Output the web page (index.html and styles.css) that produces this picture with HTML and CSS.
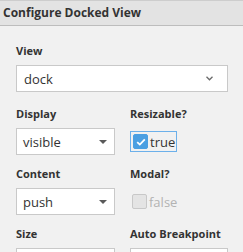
FILE: index.html
```html
<!DOCTYPE html>
<html>
<head>
    <title>Configure Docked View</title>
    <link rel="stylesheet" href="styles.css">
</head>
<body>
    <div class="panel-header">Configure Docked View</div>
    <div class="panel-body">
        <div class="field full">
            <div class="label">View</div>
            <div class="select">
                <span>dock</span>
                <svg class="chevron" width="7" height="5" viewBox="0 0 7 5"><polyline points="0.5,0.8 3.5,3.8 6.5,0.8" fill="none" stroke="#6a6a6a" stroke-width="1.3"/></svg>
            </div>
        </div>

        <div class="row">
            <div class="field">
                <div class="label">Display</div>
                <div class="select">
                    <span>visible</span>
                    <span class="caret"></span>
                </div>
            </div>
            <div class="field">
                <div class="label">Resizable?</div>
                <div class="check focused">
                    <span class="box checked">
                        <svg width="10" height="8" viewBox="0 0 10 8"><polyline points="1.2,4.2 3.8,6.6 8.8,1.4" fill="none" stroke="#fff" stroke-width="1.8"/></svg>
                    </span>
                    <span>true</span>
                </div>
            </div>
        </div>

        <div class="row">
            <div class="field">
                <div class="label">Content</div>
                <div class="select">
                    <span>push</span>
                    <span class="caret"></span>
                </div>
            </div>
            <div class="field">
                <div class="label">Modal?</div>
                <div class="check disabled">
                    <span class="box"></span>
                    <span>false</span>
                </div>
            </div>
        </div>

        <div class="row">
            <div class="field">
                <div class="label">Size</div>
                <div class="select"></div>
            </div>
            <div class="field">
                <div class="label">Auto Breakpoint</div>
                <div class="select"></div>
            </div>
        </div>
    </div>
</body>
</html>
```

FILE: styles.css
```css
body {
    margin: 0;
    background: #f1f1f1;
    font-family: 'Open Sans', sans-serif;
    color: #333;
}
.panel-header {
    height: 24px;
    line-height: 24px;
    padding-left: 3px;
    background: #e3e3e3;
    border-top: 1px solid #cdcdcd;
    border-bottom: 1px solid #bdbdbd;
    font-size: 12px;
    font-weight: 700;
    color: #333;
}
.panel-body {
    padding: 17px 15px 0 16px;
}
.row {
    display: grid;
    grid-template-columns: 99px 98px;
    column-gap: 15px;
}
.field {
    margin-bottom: 11px;
}
.field.full {
    margin-bottom: 14px;
}
.label {
    font-size: 11px;
    font-weight: 700;
    line-height: 16px;
    margin-bottom: 6px;
    color: #333;
}
.select {
    display: flex;
    align-items: center;
    justify-content: space-between;
    height: 25px;
    padding: 0 7px 0 6px;
    background: #fff;
    border: 1px solid #c9c9c9;
    font-size: 13px;
    color: #333;
}
.full .select {
    padding-left: 7px;
    padding-right: 14px;
}
.caret {
    width: 0;
    height: 0;
    border-left: 4px solid transparent;
    border-right: 4px solid transparent;
    border-top: 4px solid #5a5a5a;
}
.check {
    display: inline-flex;
    align-items: center;
    gap: 2px;
    height: 19px;
    padding: 0 1px 0 2px;
    margin-top: 3px;
    font-size: 13px;
    border: 1px solid transparent;
}
.check.focused {
    border-color: #6cb0ea;
}
.box {
    display: flex;
    align-items: center;
    justify-content: center;
    width: 13px;
    height: 13px;
    border-radius: 2px;
    border: 1px solid #c8c8c8;
    background: #e4e4e4;
}
.box.checked {
    background: #4a9fe2;
    border-color: #4a9fe2;
}
.disabled {
    color: #b3b3b3;
    padding-left: 1px;
}
```
